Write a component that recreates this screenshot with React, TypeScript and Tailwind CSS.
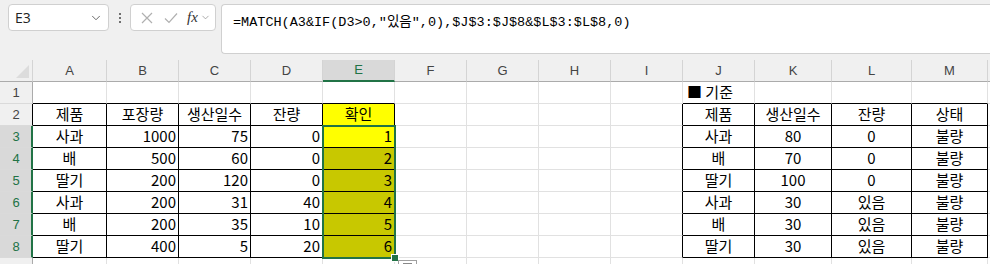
import { ChevronDown } from 'lucide-react'

const COLS = ['A', 'B', 'C', 'D', 'E', 'F', 'G', 'H', 'I', 'J', 'K', 'L', 'M', 'N']
const ROWS = [1, 2, 3, 4, 5, 6, 7, 8, 9]

const data: Record<string, string> = {
  J1: '■ 기준',
  A2: '제품', B2: '포장량', C2: '생산일수', D2: '잔량', E2: '확인',
  J2: '제품', K2: '생산일수', L2: '잔량', M2: '상태',
  A3: '사과', B3: '1000', C3: '75', D3: '0', E3: '1',
  A4: '배', B4: '500', C4: '60', D4: '0', E4: '2',
  A5: '딸기', B5: '200', C5: '120', D5: '0', E5: '3',
  A6: '사과', B6: '200', C6: '31', D6: '40', E6: '4',
  A7: '배', B7: '200', C7: '35', D7: '10', E7: '5',
  A8: '딸기', B8: '400', C8: '5', D8: '20', E8: '6',
  J3: '사과', K3: '80', L3: '0', M3: '불량',
  J4: '배', K4: '70', L4: '0', M4: '불량',
  J5: '딸기', K5: '100', L5: '0', M5: '불량',
  J6: '사과', K6: '30', L6: '있음', M6: '불량',
  J7: '배', K7: '30', L7: '있음', M7: '불량',
  J8: '딸기', K8: '30', L8: '있음', M8: '불량',
}

const leftCols = ['A', 'B', 'C', 'D', 'E']
const rightCols = ['J', 'K', 'L', 'M']

function Cell({ col, row }: { col: string; row: number }) {
  const v = data[col + row]
  const inTable = row >= 2 && row <= 8 && (leftCols.includes(col) || rightCols.includes(col))
  const blackBottom = inTable || (row === 1 && (leftCols.includes(col) || rightCols.includes(col)))
  const blackRight = inTable || (col === 'I' && row >= 2 && row <= 8)
  const isNum = v !== undefined && /^\d+$/.test(v) && leftCols.includes(col) && row >= 3
  const align = row === 1 ? 'justify-start pl-[4px]' : isNum ? 'justify-end pr-[2px]' : 'justify-center'
  let bg = 'bg-white'
  if (col === 'E' && (row === 2 || row === 3)) bg = 'bg-[#ffff00]'
  else if (col === 'E' && row >= 4 && row <= 8) bg = 'bg-[#c8c800]'

  return (
    <div
      className={
        'h-[22px] flex items-center overflow-visible whitespace-nowrap text-[15px] text-black ' +
        align + ' ' + bg + ' ' +
        (blackBottom ? 'border-b border-b-black ' : 'border-b border-b-[#e1e1e1] ') +
        (blackRight ? 'border-r border-r-black' : 'border-r border-r-[#e1e1e1]')
      }
    >
      {v}
    </div>
  )
}

function RowHeader({ row }: { row: number }) {
  const active = row >= 3 && row <= 8
  return (
    <div
      className={
        'h-[22px] flex items-center justify-center text-[13px] border-b border-b-[#dadada] ' +
        (active
          ? 'bg-[#d9d9d9] text-[#217346] border-r-2 border-r-[#217346] pl-[1px]'
          : row === 2
            ? 'bg-[#f0f0f0] text-[#444] border-r border-r-black'
            : 'bg-[#f0f0f0] text-[#444] border-r border-r-[#ababab]')
      }
      style={{ fontFamily: '"Liberation Sans", Arial, sans-serif' }}
    >
      {row < 9 ? row : ''}
    </div>
  )
}

function ColHeader({ col }: { col: string }) {
  const active = col === 'E'
  return (
    <div
      className={
        'h-[22px] flex items-center justify-center text-[13px] border-r border-r-[#d4d4d4] ' +
        (active
          ? 'bg-[#d9d9d9] text-[#217346] border-b-2 border-b-[#217346]'
          : 'bg-[#f0f0f0] text-[#444] border-b border-b-[#ababab]')
      }
      style={{ fontFamily: '"Liberation Sans", Arial, sans-serif' }}
    >
      {col === 'N' ? '' : col}
    </div>
  )
}

export default function App() {
  return (
    <div
      className="w-[990px] h-[264px] overflow-hidden bg-[#f0f0f0]"
      style={{ fontFamily: '"Noto Sans CJK KR", "Liberation Sans", sans-serif' }}
    >
      {/* Formula bar */}
      <div className="h-[60px] flex items-start pt-[4px] pl-[8px]">
        <div className="w-[101px] h-[27px] bg-white border border-[#d0d0d0] rounded-[4px] flex items-center justify-between pl-[6px] pr-[5px]">
          <span className="text-[14px] text-[#222]" style={{ fontFamily: '"Open Sans", "Liberation Sans", sans-serif' }}>E3</span>
          <ChevronDown className="w-[14px] h-[14px] text-[#555]" strokeWidth={1.5} />
        </div>
        <div className="w-[21px] h-[27px] flex flex-col items-center justify-center gap-[2px]">
          <span className="w-[2px] h-[2px] bg-[#444] rounded-full"></span>
          <span className="w-[2px] h-[2px] bg-[#444] rounded-full"></span>
          <span className="w-[2px] h-[2px] bg-[#444] rounded-full"></span>
        </div>
        <div className="w-[86px] h-[27px] bg-white border border-[#d0d0d0] rounded-[4px] flex items-center pl-[8px]">
          <svg width="16" height="16" viewBox="0 0 16 16" className="mr-[8px]">
            <path d="M3 3 L13 13 M13 3 L3 13" stroke="#b0b0b0" strokeWidth="1.2" fill="none" />
          </svg>
          <svg width="16" height="16" viewBox="0 0 16 16" className="mr-[8px]">
            <path d="M2 8.5 L6 12.5 L14 3.5" stroke="#b0b0b0" strokeWidth="1.2" fill="none" />
          </svg>
          <span className="text-[15px] italic text-[#333] leading-none mr-[2px]" style={{ fontFamily: '"Liberation Serif", serif' }}>fx</span>
          <ChevronDown className="w-[11px] h-[11px] text-[#888]" strokeWidth={1.5} />
        </div>
        <div className="ml-[5px] flex-1 h-[50px] bg-white border border-[#d0d0d0] border-r-0 rounded-l-[4px] pl-[11px] pt-[2px]">
          <span
            className="text-[13.5px] text-black whitespace-nowrap"
            style={{ fontFamily: '"Liberation Mono", "Noto Sans CJK KR", monospace' }}
          >
            =MATCH(A3&amp;IF(D3&gt;0,"있음",0),$J$3:$J$8&amp;$L$3:$L$8,0)
          </span>
        </div>
      </div>

      {/* Sheet grid */}
      <div className="relative">
        <div className="grid grid-cols-[33px_74px_72px_72px_72px_72px_72px_72px_72px_72px_72px_77px_80px_76px_1fr]">
          <div className="h-[22px] bg-[#f0f0f0] border-r border-r-[#d4d4d4] border-b border-b-[#ababab] relative">
            <div className="absolute right-[3px] bottom-[3px] w-0 h-0 border-l-[13px] border-l-transparent border-b-[13px] border-b-[#dcdcdc]"></div>
          </div>
          {COLS.map((c) => (
            <ColHeader key={c} col={c} />
          ))}
          {ROWS.map((r) => (
            <>
              <RowHeader key={'h' + r} row={r} />
              {COLS.map((c) => (
                <Cell key={c + r} col={c} row={r} />
              ))}
            </>
          ))}
        </div>

        {/* selection outline */}
        <div className="absolute left-[322px] top-[65px] w-[74px] h-[134px] border-2 border-[#217346] pointer-events-none"></div>
        <div className="absolute left-[392px] top-[195px] w-[6px] h-[6px] bg-[#217346] outline outline-1 outline-white"></div>
        {/* paste options */}
        <div className="absolute left-[398px] top-[200px] w-[19px] h-[10px] bg-white border border-[#a0a0a0] flex justify-center pt-[2px]">
          <div className="w-[9px] h-[2px] bg-[#888]"></div>
        </div>
      </div>
    </div>
  )
}
